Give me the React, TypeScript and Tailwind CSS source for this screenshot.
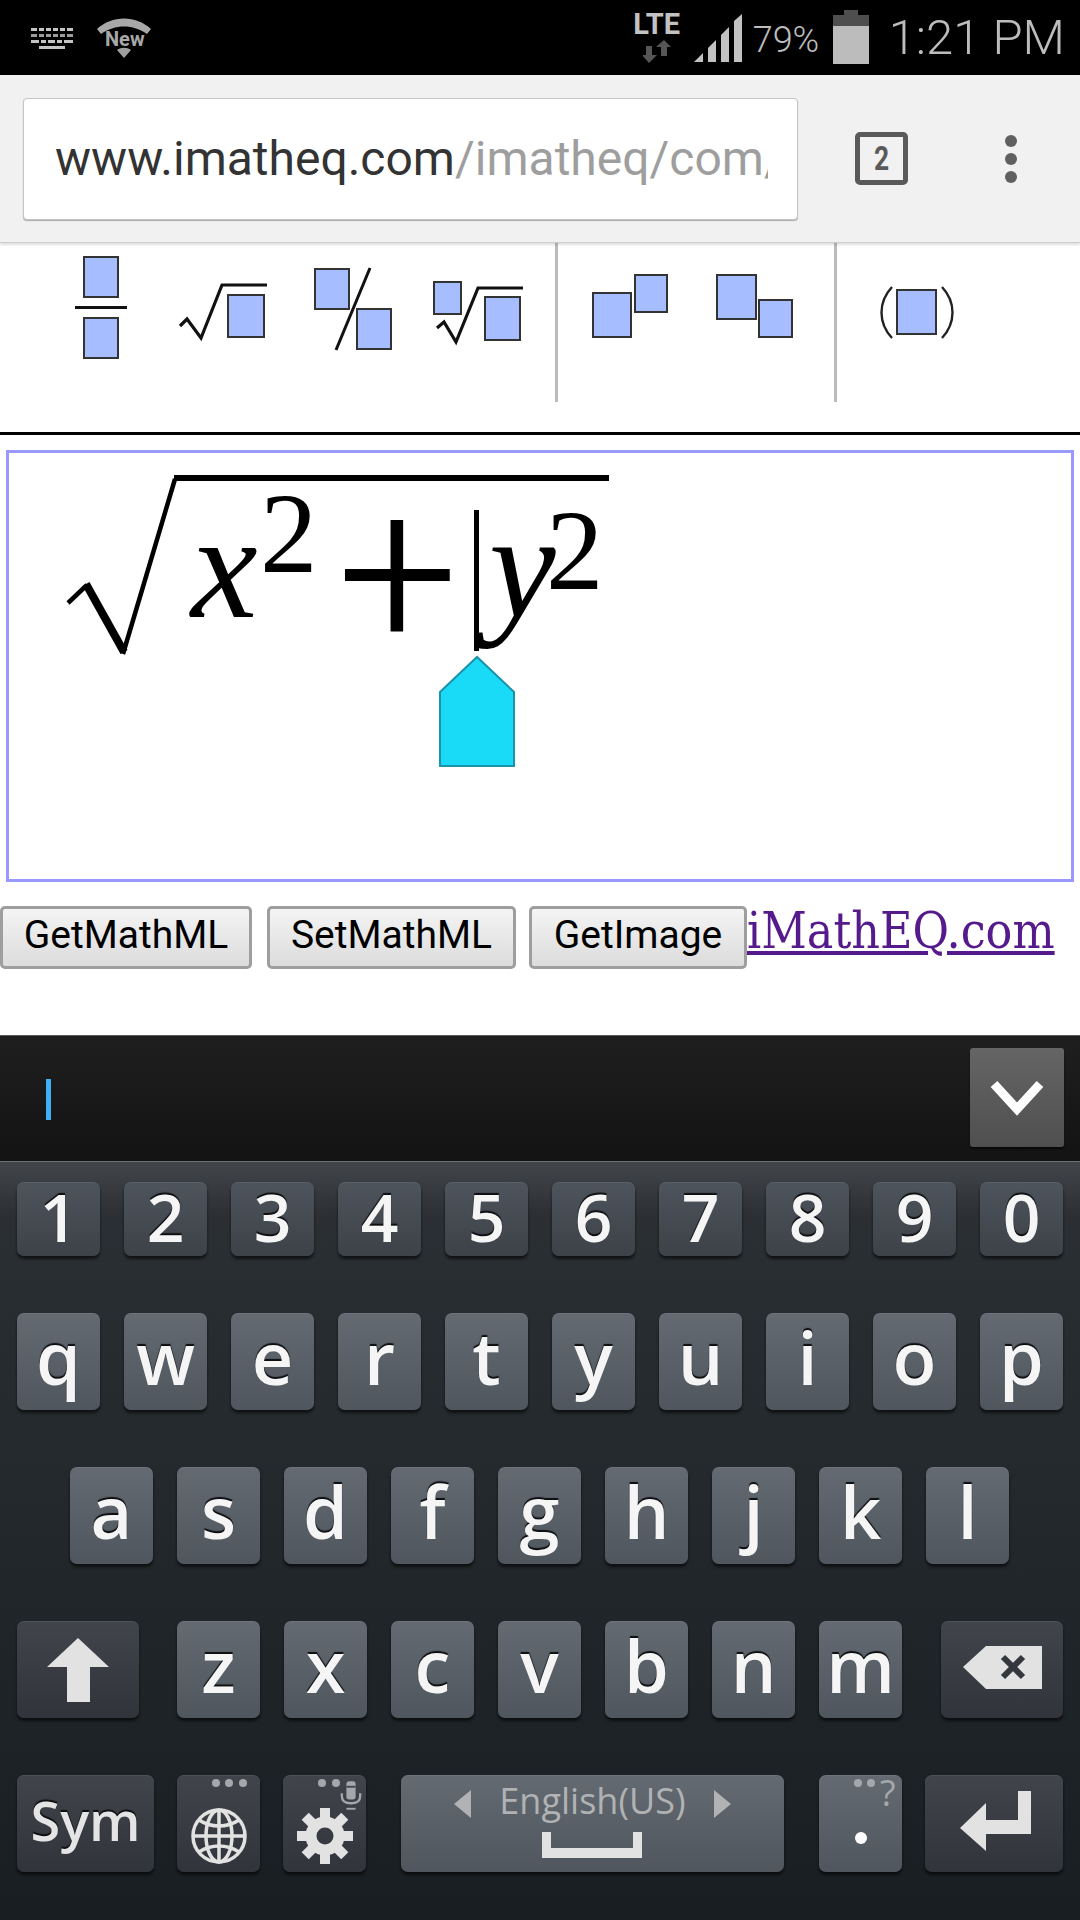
const keyBase =
  'relative flex items-center justify-center h-full rounded-[7px] shadow-[inset_0_1px_0_rgba(255,255,255,0.07),0_3px_3px_rgba(0,0,0,0.6)]'
const lightKey = keyBase + ' bg-gradient-to-b from-[#636a72] to-[#4f565d]'
const darkKey = keyBase + ' bg-gradient-to-b from-[#41454b] to-[#31353b]'
const numKey = keyBase + ' bg-gradient-to-b from-[#4e545c] to-[#3d4248]'
const glyph = "text-[#f5f5f5] font-semibold leading-none [text-shadow:0_-2px_1px_#0b0d0f]"

function LetterKey({ c, num }: { c: string; num?: boolean }) {
  return (
    <div className={(num ? numKey : lightKey) + ' w-[83px] shrink-0'}>
      <span className={glyph + (num ? ' text-[66px] pb-[6px]' : ' text-[72px] pb-[9px]')}>{c}</span>
    </div>
  )
}

function Dots({ xs }: { xs: number[] }) {
  return (
    <svg className="absolute left-0 top-0 w-[83px] h-[24px]" viewBox="0 0 83 24">
      {xs.map((x) => (
        <circle key={x} cx={x} cy={8} r={4} fill="#a5a8ab" />
      ))}
    </svg>
  )
}

function Box({ x, y, w, h }: { x: number; y: number; w: number; h: number }) {
  return <rect x={x} y={y} width={w} height={h} fill="#a6bdff" stroke="#333" strokeWidth={2} />
}

function StatusBar() {
  return (
    <div className="h-[75px] bg-black flex items-start shrink-0 text-[#bcbcbc]">
      <svg className="ml-[31px] mt-[28px] w-[42px] h-[22px]" viewBox="0 0 42 22" fill="#c4c4c4">
        <path d="M0 0h6v3H0zM8 0h5v3H8zM15 0h5v3h-5zM22 0h5v3h-5zM29 0h5v3h-5zM36 0h6v3h-6z" />
        <path d="M0 6h6v3H0zM8 6h5v3H8zM15 6h5v3h-5zM22 6h5v3h-5zM29 6h5v3h-5zM36 6h6v3h-6z" opacity="0.8" />
        <path d="M0 12h8v3H0zM10 12h5v3h-5zM17 12h7v3h-7zM26 12h5v3h-5zM33 12h9v3h-9z" />
        <path d="M8 18h26v3H8z" />
      </svg>
      <div className="relative ml-[24px] mt-[17px] w-[54px] h-[42px]">
        <svg className="absolute left-0 top-0 w-[54px] h-[42px]" viewBox="0 0 54 42">
          <path d="M0 12C15 -2 39 -2 54 12L50 17C36 7 18 7 4 17Z" fill="#a8a8a8" />
          <path d="M20 33C24 30 30 30 34 33L27 41Z" fill="#a0a0a0" />
        </svg>
        <span className="absolute left-[8px] top-[11px] text-[20px] leading-[22px] font-bold font-['Roboto',sans-serif] text-[#a8a8a8]">
          New
        </span>
      </div>
      <div className="ml-auto flex items-start font-['Roboto',sans-serif]">
        <div className="flex flex-col items-center mt-[12px] w-[48px]">
          <span className="text-[29px] leading-[25px] font-bold text-[#c2c2c2]">LTE</span>
          <svg className="w-[28px] h-[23px] mt-[3px]" viewBox="0 0 28 23" fill="#565656">
            <path d="M3 6h6v9h5l-8 8-7-8h4z" />
            <path d="M18 16h6V7h4l-7-7-8 7h5z" />
          </svg>
        </div>
        <svg className="ml-[13px] mt-[14px] w-[48px] h-[48px]" viewBox="0 0 48 48" fill="#c2c2c2">
          <path d="M0 48L9 39V48Z" />
          <path d="M14 34L22 26V48H14Z" />
          <path d="M27 21L35 13V48H27Z" />
          <path d="M40 7L48 0V48H40Z" />
        </svg>
        <span className="ml-[11px] mt-[20px] text-[36px] leading-[40px] font-light w-[64px]">79%</span>
        <div className="ml-[16px] mt-[10px] w-[36px] flex flex-col items-center">
          <div className="w-[14px] h-[5px] bg-[#4e4e4e]" />
          <div className="w-[36px] h-[11px] bg-[#4e4e4e]" />
          <div className="w-[36px] h-[38px] bg-[#bcbcbc]" />
        </div>
        <span className="ml-[20px] mr-[15px] mt-[10px] text-[49px] leading-[56px] font-light">1:21 PM</span>
      </div>
    </div>
  )
}

function BrowserBar() {
  return (
    <div className="h-[168px] bg-[#f1f1f1] flex items-center shrink-0 border-b border-[#cfcfcf] shadow-[0_2px_2px_rgba(0,0,0,0.12)] relative z-10 font-['Roboto',sans-serif]">
      <div className="ml-[23px] mt-[1px] w-[775px] h-[122px] bg-white rounded-[4px] border border-[#c4c4c4] shadow-[0_1px_1px_rgba(0,0,0,0.3)] pl-[31px] pr-[29px] flex items-center">
        <div className="overflow-hidden whitespace-nowrap text-[48px] leading-[60px] text-[#9e9e9e]">
          <span className="text-[#333333]">www.imatheq.com</span>/imatheq/com/
        </div>
      </div>
      <div className="ml-[57px] w-[53px] h-[53px] border-[5px] border-[#5a5a5a] rounded-[5px] flex items-center justify-center">
        <span className="text-[33px] leading-none font-bold text-[#5a5a5a] scale-x-80">2</span>
      </div>
      <div className="ml-[97px] flex flex-col gap-[6px]">
        <div className="w-[12px] h-[12px] rounded-full bg-[#606060]" />
        <div className="w-[12px] h-[12px] rounded-full bg-[#606060]" />
        <div className="w-[12px] h-[12px] rounded-full bg-[#606060]" />
      </div>
    </div>
  )
}

function MathToolbar() {
  return (
    <div className="h-[192px] bg-white border-b-[3px] border-black flex items-start shrink-0">
      <svg className="ml-[70px] mt-[7px] w-[62px] h-[112px]" viewBox="70 250 62 112">
        <Box x={84} y={257} w={34} h={40} />
        <Box x={84} y={318} w={34} h={40} />
        <path d="M75 307.5H127" stroke="#111" strokeWidth={3} />
      </svg>
      <svg className="ml-[44px] mt-[37px] w-[96px] h-[62px]" viewBox="176 280 96 62">
        <path d="M180 326L187 319L201 338L222 285H267" fill="none" stroke="#111" strokeWidth={3.2} />
        <Box x={228} y={295} w={36} h={42} />
      </svg>
      <svg className="ml-[38px] mt-[19px] w-[86px] h-[92px]" viewBox="310 262 86 92">
        <Box x={315} y={269} w={34} h={40} />
        <Box x={357} y={309} w={34} h={40} />
        <path d="M370 268L336 350" stroke="#111" strokeWidth={3} />
      </svg>
      <svg className="ml-[34px] mt-[35px] w-[98px] h-[68px]" viewBox="430 278 98 68">
        <Box x={434} y={282} w={27} h={32} />
        <path d="M437 328L444 322L456 342L478 288H523" fill="none" stroke="#111" strokeWidth={3.2} />
        <Box x={485} y={297} w={35} h={43} />
      </svg>
      <div className="ml-[27px] w-[3px] h-[159px] bg-[#bbbbbb]" />
      <svg className="ml-[32px] mt-[29px] w-[80px] h-[68px]" viewBox="590 272 80 68">
        <Box x={593} y={293} w={38} h={44} />
        <Box x={635} y={275} w={32} h={37} />
      </svg>
      <svg className="ml-[44px] mt-[29px] w-[82px] h-[68px]" viewBox="714 272 82 68">
        <Box x={717} y={275} w={39} h={44} />
        <Box x={759} y={300} w={33} h={37} />
      </svg>
      <div className="ml-[38px] w-[3px] h-[159px] bg-[#bbbbbb]" />
      <svg className="ml-[41px] mt-[41px] w-[78px] h-[56px]" viewBox="878 284 78 56">
        <Box x={897} y={290} w={39} h={44} />
        <path d="M892 287C878 302 878 323 892 338" fill="none" stroke="#222" strokeWidth={2.4} />
        <path d="M942 287C956 302 956 323 942 338" fill="none" stroke="#222" strokeWidth={2.4} />
      </svg>
    </div>
  )
}

function Editor() {
  const mathFont = "font-['Liberation_Serif',serif] leading-none text-black absolute"
  return (
    <div className="relative ml-[6px] mt-[15px] w-[1068px] h-[432px] border-[3px] border-[#9999ff] bg-white shrink-0">
      <svg className="absolute left-0 top-0 w-[700px] h-[330px]" viewBox="9 453 700 330">
        <path d="M68 603L87 585" fill="none" stroke="#000" strokeWidth={4.5} />
        <path d="M86 584L124 652" fill="none" stroke="#000" strokeWidth={8} />
        <path d="M123 654L175 479" fill="none" stroke="#000" strokeWidth={4.5} />
        <path d="M174 478H609" fill="none" stroke="#000" strokeWidth={6} />
        <path d="M440 692L477 657L514 692V766H440Z" fill="#19dbf8" stroke="#1b93a9" strokeWidth={2} />
      </svg>
      <span className={mathFont + ' italic text-[150px] left-[182px] top-[38px]'}>x</span>
      <span className={mathFont + ' text-[115px] left-[251px] top-[23px]'}>2</span>
      <span className="absolute left-[328px] top-[13px] font-['Roboto',sans-serif] font-light leading-none text-black text-[215px]">+</span>
      <span className={mathFont + ' italic text-[150px] left-[480px] top-[38px]'}>y</span>
      <span className={mathFont + ' text-[115px] left-[537px] top-[40px]'}>2</span>
      <div className="absolute left-[465px] top-[57px] w-[5px] h-[141px] bg-black" />
    </div>
  )
}

function Buttons() {
  const btn =
    "h-[63px] shrink-0 rounded-[5px] border-[3px] border-[#9e9e9e] bg-gradient-to-b from-[#f4f4f4] to-[#dcdcdc] text-[39px] leading-none text-black font-['Roboto',sans-serif] flex items-center justify-center pb-[5px]"
  return (
    <div className="mt-[24px] flex items-start h-[129px] shrink-0 bg-white">
      <button className={btn + ' w-[252px]'}>GetMathML</button>
      <button className={btn + ' w-[249px] ml-[15px]'}>SetMathML</button>
      <button className={btn + ' w-[218px] ml-[13px]'}>GetImage</button>
      <a className="mt-[-5px] text-[#551a8b] underline text-[49.5px] leading-[60px] font-['DejaVu_Serif',serif] [font-stretch:condensed] whitespace-nowrap">
        iMathEQ.com
      </a>
    </div>
  )
}

function Keyboard() {
  return (
    <div className="flex-1 flex flex-col font-['Open_Sans',sans-serif]">
      <div className="h-[127px] shrink-0 border-t border-t-[#5a5a5a] border-b border-b-[#6b7073] bg-gradient-to-b from-[#1f1f1f] to-[#131313] flex items-center relative">
        <div className="ml-[46px] mt-[2px] w-[5px] h-[41px] bg-[#3fb0f5]" />
        <div className="ml-auto mr-[16px] mt-[-2px] w-[94px] h-[99px] rounded-[3px] bg-gradient-to-b from-[#656565] to-[#4f4f4f] shadow-[0_2px_2px_rgba(0,0,0,0.6)] flex items-center justify-center">
          <svg className="w-[54px] h-[36px]" viewBox="0 0 54 36">
            <path d="M4 4L27 29L50 4" fill="none" stroke="#fff" strokeWidth={9} />
          </svg>
        </div>
      </div>
      <div className="flex-1 bg-[linear-gradient(to_bottom,#42464a_0px,#2b2f33_55px,#282d31_140px,#191e22_758px)] pt-[20px] flex flex-col">
        <div className="flex h-[74px] gap-[24px] px-[17px]">
          {'1234567890'.split('').map((c) => (
            <LetterKey key={c} c={c} num />
          ))}
        </div>
        <div className="flex h-[97px] gap-[24px] px-[17px] mt-[57px]">
          {'qwertyuiop'.split('').map((c) => (
            <LetterKey key={c} c={c} />
          ))}
        </div>
        <div className="flex h-[97px] gap-[24px] pl-[70px] mt-[57px]">
          {'asdfghjkl'.split('').map((c) => (
            <LetterKey key={c} c={c} />
          ))}
        </div>
        <div className="flex h-[97px] gap-[24px] pl-[17px] mt-[57px]">
          <div className={darkKey + ' w-[122px] mr-[14px]'}>
            <svg className="w-[62px] h-[65px]" viewBox="0 0 62 65">
              <path d="M31 1L62 30H43V65H20V30H0Z" fill="#e2e2e2" />
            </svg>
          </div>
          {'zxcvbnm'.split('').map((c) => (
            <LetterKey key={c} c={c} />
          ))}
          <div className={darkKey + ' w-[122px] ml-[15px]'}>
            <svg className="w-[80px] h-[45px] ml-[1px] mt-[-5px]" viewBox="0 0 80 45">
              <path d="M0 22L23 1H79V44H23Z" fill="#e2e2e2" />
              <path d="M40 12L60 32M60 12L40 32" stroke="#34383e" strokeWidth={6} fill="none" />
            </svg>
          </div>
        </div>
        <div className="flex h-[97px] pl-[17px] mt-[57px]">
          <div className={darkKey + ' w-[137px]'}>
            <span className="text-[54px] font-semibold leading-none text-[#e4e4e4] pb-[8px] [text-shadow:0_-2px_1px_#0b0d0f]">Sym</span>
          </div>
          <div className={darkKey + ' w-[83px] ml-[23px]'}>
            <Dots xs={[39, 52, 66]} />
            <svg className="w-[56px] h-[56px] mt-[24px]" viewBox="0 0 56 56" fill="none" stroke="#e2e2e2" strokeWidth={3.5}>
              <circle cx={28} cy={28} r={26} />
              <ellipse cx={28} cy={28} rx={13} ry={26} />
              <path d="M28 2V54M2 28H54" />
              <path d="M8 12C20 20 36 20 48 12M8 44C20 36 36 36 48 44" />
            </svg>
          </div>
          <div className={darkKey + ' w-[83px] ml-[23px]'}>
            <Dots xs={[39, 53]} />
            <svg className="absolute left-[57px] top-[4px] w-[22px] h-[32px]" viewBox="0 0 24 32" fill="none" stroke="#a5a8ab">
              <rect x={7} y={1} width={10} height={20} rx={3} fill="#a5a8ab" stroke="none" />
              <path d="M7 7H17" stroke="#41454b" strokeWidth={2} />
              <path d="M2 14V17C2 23 7 25 12 25C17 25 22 23 22 17V14" strokeWidth={2.5} />
              <path d="M7 31H17" strokeWidth={2} />
            </svg>
            <svg className="w-[56px] h-[56px] mt-[24px]" viewBox="-28 -28 56 56" fill="#e2e2e2">
              {[0, 45, 90, 135, 180, 225, 270, 315].map((a) => (
                <rect key={a} x={-5} y={-28} width={10} height={14} transform={'rotate(' + a + ')'} />
              ))}
              <circle r={14} fill="none" stroke="#e2e2e2" strokeWidth={11} />
            </svg>
          </div>
          <div className={lightKey + ' w-[383px] ml-[35px] flex-col justify-start'}>
            <div className="flex items-center mt-[9px] h-[40px]">
              <svg className="w-[17px] h-[28px]" viewBox="0 0 17 28">
                <path d="M17 0V28L0 14Z" fill="#b0b2b4" />
              </svg>
              <span className="mx-[28px] text-[36px] font-medium leading-none text-[#b0b2b4] pb-[7px]">English(US)</span>
              <svg className="w-[17px] h-[28px]" viewBox="0 0 17 28">
                <path d="M0 0V28L17 14Z" fill="#b0b2b4" />
              </svg>
            </div>
            <div className="mt-[8px] w-[100px] h-[26px] border-x-[9px] border-b-[10px] border-[#e2e2e2] ml-[-2px]" />
          </div>
          <div className={lightKey + ' w-[83px] ml-[35px]'}>
            <Dots xs={[39, 52]} />
            <span className="absolute left-[61px] top-[-2px] text-[36px] font-medium leading-[40px] text-[#a5a8ab]">?</span>
            <div className="w-[12px] h-[12px] rounded-full bg-white mt-[28px]" />
          </div>
          <div className={darkKey + ' w-[138px] ml-[23px]'}>
            <svg className="w-[72px] h-[62px] mt-[-3px] ml-[3px]" viewBox="0 0 72 62">
              <path d="M0 37L26 12V29H58V0H71V43H26V60Z" fill="#e2e2e2" />
            </svg>
          </div>
        </div>
      </div>
    </div>
  )
}

export default function App() {
  return (
    <div className="w-[1080px] h-[1920px] overflow-hidden flex flex-col bg-white">
      <StatusBar />
      <BrowserBar />
      <MathToolbar />
      <Editor />
      <Buttons />
      <Keyboard />
    </div>
  )
}
